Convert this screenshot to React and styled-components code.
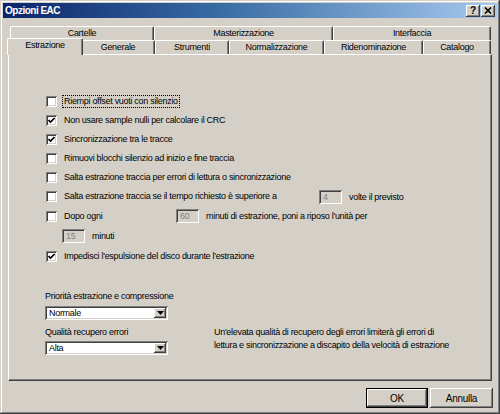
import styled, { createGlobalStyle } from 'styled-components';

const GlobalStyle = createGlobalStyle`
  html, body { margin: 0; padding: 0; background: #d4d0c8; }
  body {
    font-family: "Liberation Sans", Arial, sans-serif;
    font-size: 9px;
    letter-spacing: -0.3px;
    color: #000;
  }
`;

const raised = `
  box-shadow: inset -1px -1px #404040, inset 1px 1px #ffffff, inset -2px -2px #808080, inset 2px 2px #d4d0c8;
`;

const sunken = `
  box-shadow: inset 1px 1px #808080, inset -1px -1px #ffffff, inset 2px 2px #404040, inset -2px -2px #d4d0c8;
`;

const Window = styled.div`
  width: 500px;
  height: 414px;
  box-sizing: border-box;
  padding: 3px;
  background: #d4d0c8;
  display: flex;
  flex-direction: column;
  box-shadow: inset -1px -1px #404040, inset 1px 1px #d4d0c8, inset -2px -2px #808080, inset 2px 2px #ffffff;
`;

const TitleBar = styled.div`
  height: 15px;
  display: flex;
  align-items: center;
  justify-content: space-between;
  padding: 0 2px 0 2px;
  background: linear-gradient(to right, #0a246a, #3a6ea5 45%, #a6caf0);
`;

const TitleText = styled.span`
  color: #fff;
  font-weight: bold;
  font-size: 10px;
  letter-spacing: -0.5px;
`;

const TitleButtons = styled.div`
  display: flex;
  gap: 1px;
`;

const TitleButton = styled.div`
  width: 14px;
  height: 12px;
  background: #d4d0c8;
  ${raised}
  display: flex;
  align-items: center;
  justify-content: center;
  font-weight: bold;
  font-size: 10px;
  letter-spacing: 0;
  line-height: 1;
`;

const Body = styled.div`
  flex: 1;
  display: flex;
  flex-direction: column;
  padding: 8px 5px 0 5px;
`;

const TabRow = styled.div`
  display: flex;
  align-items: flex-end;
  height: ${p => p.$h}px;
  padding-left: ${p => p.$indent}px;
  margin-top: ${p => p.$overlap || 0}px;
  position: relative;
  z-index: ${p => p.$z || 0};
`;

const Tab = styled.div`
  box-sizing: border-box;
  width: ${p => (p.$active ? p.$w + 4 : p.$w)}px;
  height: ${p => (p.$active ? 17 : 14)}px;
  margin: ${p => (p.$active ? '0 -2px -1px -2px' : '0')};
  position: relative;
  z-index: ${p => (p.$active ? 3 : 1)};
  background: #d4d0c8;
  border-top: 1px solid #fff;
  border-left: 1px solid #fff;
  border-right: 1px solid #404040;
  box-shadow: inset -1px 0 #808080;
  border-radius: 2px 2px 0 0;
  display: flex;
  justify-content: center;
  padding-top: 1px;
  line-height: 11px;
  white-space: nowrap;
`;

const Panel = styled.div`
  height: 327px;
  box-sizing: border-box;
  border-top: 1px solid #fff;
  border-left: 1px solid #fff;
  border-right: 1px solid #404040;
  border-bottom: 1px solid #404040;
  box-shadow: inset -1px -1px #808080;
  padding: 37px 0 0 37px;
  display: flex;
  flex-direction: column;
`;

const Row = styled.div`
  display: flex;
  align-items: center;
  height: ${p => p.$h || 19}px;
  padding-left: ${p => p.$indent || 0}px;
  white-space: nowrap;
`;

const Box = styled.span`
  width: 11px;
  height: 11px;
  flex: none;
  background: #fff;
  ${sunken}
  display: flex;
  align-items: center;
  justify-content: center;
  margin-right: 6px;
`;

const Label = styled.span`
  display: inline-block;
  width: ${p => (p.$w ? p.$w + 'px' : 'auto')};
  padding: 0 1px;
  margin-left: -1px;
  border: 1px dotted ${p => (p.$focus ? '#000' : 'transparent')};
  line-height: 11px;
`;

const Edit = styled.span`
  width: 23px;
  height: 14px;
  box-sizing: border-box;
  flex: none;
  background: #d4d0c8;
  ${sunken}
  color: #808080;
  padding: 2px 0 0 4px;
  line-height: 11px;
  margin-right: 7px;
`;

const Settings = styled.div`
  display: flex;
  flex-direction: column;
  margin-top: 24px;
  margin-left: -1px;
`;

const SettingRow = styled.div`
  display: flex;
  align-items: flex-start;
`;

const Field = styled.div`
  display: flex;
  flex-direction: column;
  width: 123px;
  margin-bottom: 6px;
`;

const FieldLabel = styled.div`
  line-height: 12px;
  margin-bottom: ${p => p.$gap || 4}px;
  white-space: nowrap;
`;

const Combo = styled.div`
  height: 14px;
  box-sizing: border-box;
  background: #fff;
  ${sunken}
  display: flex;
  align-items: stretch;
  padding: 2px;
`;

const ComboValue = styled.span`
  flex: 1;
  padding-left: 2px;
  line-height: 10px;
`;

const ComboArrow = styled.span`
  width: 12px;
  background: #d4d0c8;
  ${raised}
  display: flex;
  align-items: center;
  justify-content: center;
`;

const Note = styled.div`
  margin: 0 0 0 46px;
  line-height: 13px;
  white-space: nowrap;
`;

const Footer = styled.div`
  display: flex;
  justify-content: flex-end;
  gap: 2px;
  margin: 7px -1px 0 0;
`;

const Button = styled.div`
  width: ${p => p.$w}px;
  height: 20px;
  box-sizing: border-box;
  background: #d4d0c8;
  ${p => (p.$default
    ? 'box-shadow: inset 0 0 0 1px #000, inset -2px -2px #404040, inset 2px 2px #ffffff, inset -3px -3px #808080;'
    : raised)}
  display: flex;
  align-items: center;
  justify-content: center;
  font-size: 10px;
`;

const Check = () => (
  <svg width="7" height="7" viewBox="0 0 7 7">
    <path d="M0.5 3 L2.5 5 L6.5 1" fill="none" stroke="#000" strokeWidth="1.6" />
  </svg>
);

const Arrow = () => (
  <svg width="7" height="4" viewBox="0 0 7 4">
    <path d="M0 0 H7 L3.5 4 Z" fill="#000" />
  </svg>
);

const CheckItem = ({ checked, focus, children, h }) => (
  <Row $h={h}>
    <Box>{checked && <Check />}</Box>
    <Label $focus={focus}>{children}</Label>
  </Row>
);

const topTabs = [
  ['Cartelle', 144],
  ['Masterizzazione', 179],
  ['Interfaccia', 158],
];

const bottomTabs = [
  ['Estrazione', 72, true],
  ['Generale', 74],
  ['Strumenti', 74],
  ['Normalizzazione', 95],
  ['Ridenominazione', 99],
  ['Catalogo', 68],
];

export default function App() {
  return (
    <>
      <GlobalStyle />
      <Window>
        <TitleBar>
          <TitleText>Opzioni EAC</TitleText>
          <TitleButtons>
            <TitleButton>?</TitleButton>
            <TitleButton>
              <svg width="8" height="7" viewBox="0 0 8 7">
                <path d="M1 0.5 L7 6.5 M7 0.5 L1 6.5" stroke="#000" strokeWidth="1.6" />
              </svg>
            </TitleButton>
          </TitleButtons>
        </TitleBar>
        <Body>
          <TabRow $h={14} $indent={2}>
            {topTabs.map(([t, w]) => (
              <Tab key={t} $w={w}>{t}</Tab>
            ))}
          </TabRow>
          <TabRow $h={16} $indent={1} $overlap={-2} $z={2}>
            {bottomTabs.map(([t, w, a]) => (
              <Tab key={t} $w={w} $active={a}>{t}</Tab>
            ))}
          </TabRow>
          <Panel>
            <CheckItem focus>Riempi offset vuoti con silenzio</CheckItem>
            <CheckItem checked>Non usare sample nulli per calcolare il CRC</CheckItem>
            <CheckItem checked>Sincronizzazione tra le tracce</CheckItem>
            <CheckItem>Rimuovi blocchi silenzio ad inizio e fine traccia</CheckItem>
            <CheckItem>Salta estrazione traccia per errori di lettura o sincronizzazione</CheckItem>
            <Row>
              <Box />
              <Label $w={253}>Salta estrazione traccia se il tempo richiesto è superiore a</Label>
              <Edit>4</Edit>
              <span>volte il previsto</span>
            </Row>
            <Row $h={20}>
              <Box />
              <Label $w={110}>Dopo ogni</Label>
              <Edit>60</Edit>
              <span>minuti di estrazione, poni a riposo l'unità per</span>
            </Row>
            <Row $h={20} $indent={16}>
              <Edit>15</Edit>
              <span>minuti</span>
            </Row>
            <CheckItem checked h={20}>Impedisci l'espulsione del disco durante l'estrazione</CheckItem>
            <Settings>
              <Field>
                <FieldLabel>Priorità estrazione e compressione</FieldLabel>
                <Combo>
                  <ComboValue>Normale</ComboValue>
                  <ComboArrow><Arrow /></ComboArrow>
                </Combo>
              </Field>
              <SettingRow>
                <Field>
                  <FieldLabel $gap={3}>Qualità recupero errori</FieldLabel>
                  <Combo>
                    <ComboValue>Alta</ComboValue>
                    <ComboArrow><Arrow /></ComboArrow>
                  </Combo>
                </Field>
                <Note>
                  Un'elevata qualità di recupero degli errori limiterà gli errori di
                  <br />
                  lettura e sincronizzazione a discapito della velocità di estrazione
                </Note>
              </SettingRow>
            </Settings>
          </Panel>
          <Footer>
            <Button $w={62} $default>OK</Button>
            <Button $w={63}>Annulla</Button>
          </Footer>
        </Body>
      </Window>
    </>
  );
}
